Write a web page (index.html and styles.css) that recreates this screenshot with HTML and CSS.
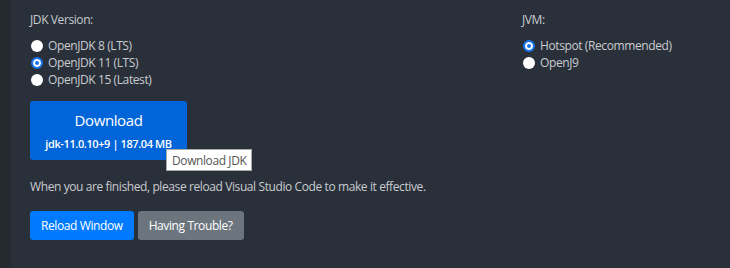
FILE: index.html
```html
<!DOCTYPE html>
<html lang="en">
<head>
    <meta charset="UTF-8">
    <title>Install JDK</title>
    <link rel="stylesheet" href="styles.css">
</head>
<body>
    <div class="sidebar"></div>
    <div class="main">
        <div class="columns">
            <div class="col col-jdk">
                <p class="group-title">JDK Version:</p>
                <label class="option"><input type="radio" name="jdk" value="8"> OpenJDK 8 (LTS)</label>
                <label class="option"><input type="radio" name="jdk" value="11" checked> OpenJDK 11 (LTS)</label>
                <label class="option"><input type="radio" name="jdk" value="15"> OpenJDK 15 (Latest)</label>
            </div>
            <div class="col col-jvm">
                <p class="group-title">JVM:</p>
                <label class="option"><input type="radio" name="jvm" value="hotspot" checked> Hotspot (Recommended)</label>
                <label class="option"><input type="radio" name="jvm" value="openj9"> OpenJ9</label>
            </div>
        </div>
        <div class="download-wrap">
            <button class="btn-download">
                <span class="dl-title">Download</span>
                <span class="dl-info">jdk-11.0.10+9 | 187.04 MB</span>
            </button>
            <span class="tooltip">Download JDK</span>
        </div>
        <p class="note">When you are finished, please reload Visual Studio Code to make it effective.</p>
        <div class="actions">
            <button class="btn btn-primary">Reload Window</button>
            <button class="btn btn-secondary">Having Trouble?</button>
        </div>
    </div>
</body>
</html>
```
FILE: styles.css
```css
body {
    margin: 0;
    height: 268px;
    display: flex;
    background: #29303a;
    color: #c9ccd0;
    font-family: "Open Sans", Arial, sans-serif;
    font-size: 12px;
    letter-spacing: -0.4px;
    overflow: hidden;
}
.sidebar {
    width: 11px;
    background: #252a31;
}
.main {
    flex: 1;
    padding: 12px 19px 0;
}
.columns {
    display: flex;
}
.col-jdk {
    width: 492px;
}
.group-title {
    margin: 0 0 9px;
    line-height: 16px;
}
.option {
    display: flex;
    align-items: center;
    height: 17px;
    gap: 5px;
}
input[type="radio"] {
    appearance: none;
    margin: 0 0 0 1px;
    width: 12px;
    height: 12px;
    border-radius: 50%;
    background: #fff;
}
input[type="radio"]:checked {
    border: 2px solid #1a73e8;
    box-shadow: inset 0 0 0 2px #fff;
    background: #1a73e8;
}
.download-wrap {
    position: relative;
    margin-top: 13px;
}
.btn-download {
    width: 157px;
    height: 59px;
    border: none;
    border-radius: 3px;
    background: #0065d9;
    color: #fff;
    font-family: inherit;
    letter-spacing: inherit;
    display: flex;
    flex-direction: column;
    align-items: center;
    justify-content: center;
    padding: 0;
}
.dl-title {
    font-size: 15px;
    line-height: 20px;
}
.dl-info {
    font-size: 11px;
    font-weight: 600;
    margin-top: 6px;
}
.tooltip {
    position: absolute;
    left: 136px;
    top: 48px;
    background: #fff;
    color: #555;
    border: 1px solid #aaa;
    padding: 3px 5px 2px;
    font-size: 12px;
    line-height: 15px;
}
.note {
    margin: 18px 0 16px;
}
.actions {
    display: flex;
    gap: 4px;
}
.btn {
    height: 29px;
    padding: 0 11px;
    border: none;
    border-radius: 3px;
    color: #fff;
    font-family: inherit;
    letter-spacing: inherit;
    font-size: 12px;
}
.btn-primary {
    background: #007bff;
}
.btn-secondary {
    background: #6c757d;
}
```
